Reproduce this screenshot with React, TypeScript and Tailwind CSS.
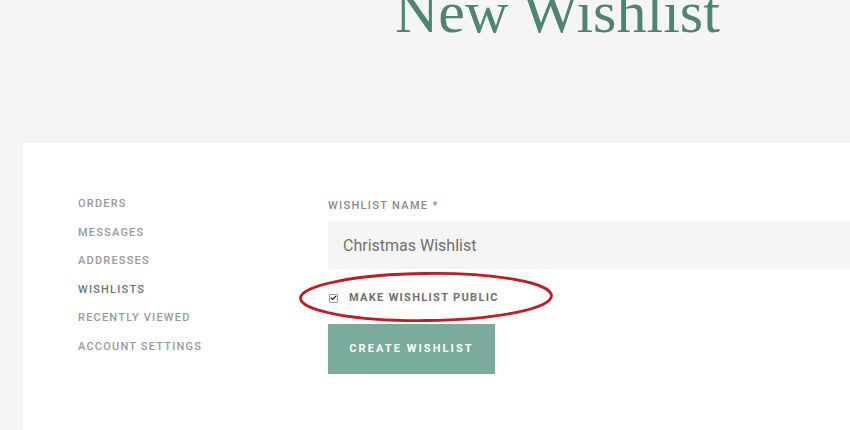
import { Check } from 'lucide-react';

const navItems = [
  { label: 'ORDERS', active: false },
  { label: 'MESSAGES', active: false },
  { label: 'ADDRESSES', active: false },
  { label: 'WISHLISTS', active: true },
  { label: 'RECENTLY VIEWED', active: false },
  { label: 'ACCOUNT SETTINGS', active: false },
];

const App = () => {
  return (
    <div className="w-[850px] h-[430px] overflow-hidden bg-[#f5f5f5] font-['Roboto','Liberation_Sans',sans-serif]">
      <header className="h-[143px] pl-[395px] overflow-hidden">
        <h1 className="-mt-[18px] text-[60px] leading-[60px] text-[#4f8474] font-['Liberation_Serif',serif] font-normal whitespace-nowrap">
          New Wishlist
        </h1>
      </header>

      <section className="relative ml-[23px] h-[287px] bg-white flex">
        <nav className="w-[250px] pl-[55px] pt-[47px] flex flex-col">
          {navItems.map((item) => (
            <a
              key={item.label}
              className={`text-[11px] leading-[28.5px] font-medium tracking-[0.11em] whitespace-nowrap ${
                item.active ? 'text-[#6b7772] font-bold' : 'text-[#9a9a9a]'
              }`}
            >
              {item.label}
            </a>
          ))}
        </nav>

        <form className="flex-1 pl-[55px] pt-[55px] flex flex-col">
          <label className="text-[11px] leading-[16px] font-medium tracking-[0.12em] text-[#8a8a8a]">
            WISHLIST NAME *
          </label>
          <div className="mt-[8px] h-[47px] bg-[#f5f5f5] flex items-center pl-[15px] text-[16px] text-[#707070]">
            Christmas Wishlist
          </div>

          <div className="mt-[20px] h-[18px] flex items-center gap-[11px] pl-[1px]">
            <span className="w-[9px] h-[9px] border border-[#9a9a9a] rounded-[1px] flex items-center justify-center bg-white">
              <Check className="w-[8px] h-[8px] text-[#222]" strokeWidth={4} />
            </span>
            <span className="text-[11px] font-bold tracking-[0.12em] text-[#707070]">
              MAKE WISHLIST PUBLIC
            </span>
          </div>

          <button
            type="button"
            className="mt-[17px] w-[167px] h-[50px] bg-[#7aab9d] text-white text-[11px] font-bold tracking-[0.19em]"
          >
            CREATE WISHLIST
          </button>
        </form>

        <svg
          className="absolute left-[275px] top-[128px] pointer-events-none"
          width="256"
          height="52"
          viewBox="0 0 256 52"
        >
          <ellipse
            cx="128"
            cy="26"
            rx="125.5"
            ry="23.5"
            fill="none"
            stroke="#c41a22"
            strokeWidth="2.8"
            transform="rotate(-0.6 128 26)"
          />
        </svg>
      </section>
    </div>
  );
};

export default App;
